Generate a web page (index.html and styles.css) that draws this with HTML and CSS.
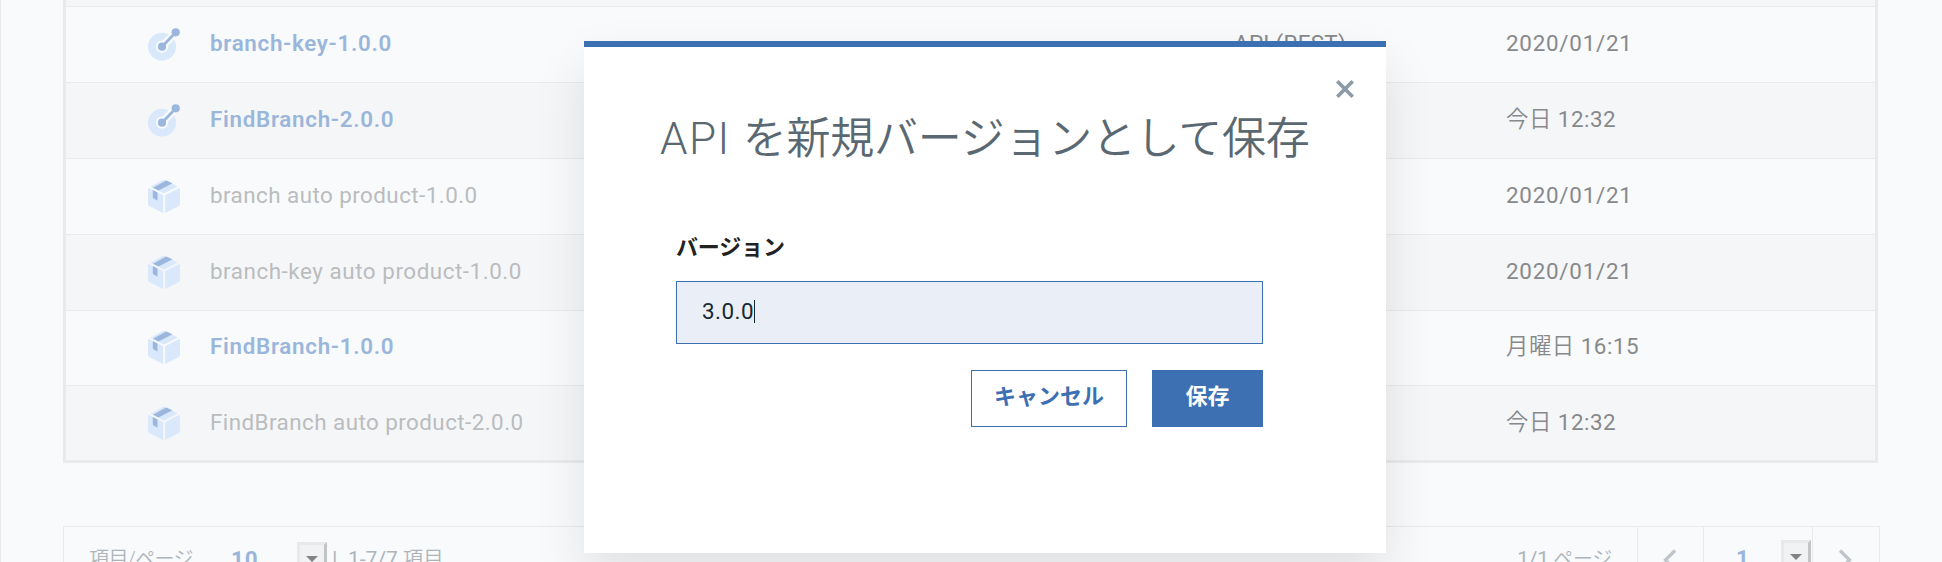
FILE: index.html
```html
<!DOCTYPE html>
<html lang="ja">
<head>
<meta charset="utf-8">
<title>API を新規バージョンとして保存</title>
<link rel="stylesheet" href="styles.css">
</head>
<body>
<svg class="defs" width="0" height="0">
  <symbol id="api" viewBox="0 0 32 34">
    <circle cx="14" cy="19.7" r="14" fill="#d9e8fb"/>
    <path d="M14 19.7 28 5.2" stroke="#f8fafc" stroke-width="7.5"/>
    <circle cx="14" cy="19.7" r="6.2" fill="#f8fafc"/>
    <path d="M14 19.7 27.6 5.5" stroke="#9bb7dd" stroke-width="2.8"/>
    <circle cx="14" cy="19.7" r="4.1" fill="#9bb7dd"/>
    <circle cx="27.7" cy="5.3" r="4.1" fill="#9bb7dd"/>
  </symbol>
  <symbol id="box" viewBox="0 0 32 34">
    <path d="M2.5 7.8 14.8 1Q16 .4 17.2 1L29.7 7.6 16 14.4Z" fill="#d9e8fb"/>
    <path d="M5 8.7 18.2 1.4 24.5 4.2 10.5 11.4Z" fill="#9bb7dd"/>
    <path d="M0 10.2Q0 8.6 1.3 9.2L15.2 16.2V34L1.2 27Q0 26.3 0 25Z" fill="#d9e8fb"/>
    <path d="M32 10.2Q32 8.6 30.7 9.2L17.2 16.2V34L30.8 27Q32 26.3 32 25Z" fill="#d9e8fb"/>
    <path d="M4.8 11 9.5 13.4V21.6L6 19.8Q4.8 19.2 4.8 18Z" fill="#9bb7dd"/>
  </symbol>
</svg>
<main class="page">
  <div class="table">
    <div class="row row-cut"></div>
    <div class="row"><svg class="icon"><use href="#api"/></svg><span class="name link n1">branch-key-1.0.0</span><span class="type">API (REST)</span><span class="date">2020/01/21</span></div>
    <div class="row alt"><svg class="icon"><use href="#api"/></svg><span class="name link n2">FindBranch-2.0.0</span><span class="type"></span><span class="date today"><span class="cj">今日</span> 12:32</span></div>
    <div class="row"><svg class="icon"><use href="#box"/></svg><span class="name n3">branch auto product-1.0.0</span><span class="type"></span><span class="date">2020/01/21</span></div>
    <div class="row alt"><svg class="icon"><use href="#box"/></svg><span class="name n4">branch-key auto product-1.0.0</span><span class="type"></span><span class="date">2020/01/21</span></div>
    <div class="row short"><svg class="icon"><use href="#box"/></svg><span class="name link n2">FindBranch-1.0.0</span><span class="type"></span><span class="date today"><span class="cj">月曜日</span> 16:15</span></div>
    <div class="row alt last"><svg class="icon"><use href="#box"/></svg><span class="name n5">FindBranch auto product-2.0.0</span><span class="type"></span><span class="date today"><span class="cj">今日</span> 12:32</span></div>
  </div>
  <div class="pager">
    <div class="pager-left"><span class="per">項目/ページ</span><b class="size">10</b><span class="select"></span><span class="bar">|</span><span class="range"><span class="num">1-7/7</span> 項目</span></div>
    <span class="pages"><span class="num">1/1</span> ページ</span>
    <div class="cell prev"><svg width="14" height="22" viewBox="0 0 14 22"><path d="M12 1.5 2.5 11 12 20.5"/></svg></div>
    <div class="cell current"><b>1</b><span class="select"></span></div>
    <div class="cell next"><svg width="14" height="22" viewBox="0 0 14 22"><path d="M2 1.5 11.5 11 2 20.5"/></svg></div>
  </div>
</main>
<section class="modal">
  <svg class="close" viewBox="0 0 18 18"><path d="M1.3 1.3 16.7 16.7M16.7 1.3 1.3 16.7"/></svg>
  <h1 class="title"><span class="latin">API </span>を新規バージョンとして保存</h1>
  <div class="form">
    <label class="label">バージョン</label>
    <div class="input"><span class="value">3.0.0</span><i class="caret"></i></div>
    <div class="actions"><button class="btn cancel">キャンセル</button><button class="btn save">保存</button></div>
  </div>
</section>
</body>
</html>
```
FILE: styles.css
```css
* { box-sizing: border-box; }
body {
  margin: 0;
  height: 562px;
  overflow: hidden;
  background: #f8fafc;
  font: 22.4px/30px Roboto, "Noto Sans CJK JP", sans-serif;
  color: #87898b;
}
.defs { position: absolute; }
.page { height: 562px; padding: 0 63px 0 62px; border-left: 1px solid #e8eaec; overflow: hidden; }
.table { width: 1815px; height: 463px; border: 3px solid #e8eaec; border-top: 0; }
.row {
  display: grid;
  grid-template-columns: 32px 1054px 272px 1fr;
  padding-left: 82px;
  height: 76px;
  align-items: center;
  border-bottom: 1px solid #e8eaec;
  white-space: nowrap;
}
.row-cut { height: 7px; background: #f5f6f8; }
.alt { background: #f5f6f8; }
.short { height: 75px; }
.last { height: 74px; border-bottom: 0; }
.icon { width: 32px; height: 34px; margin-bottom: 2px; }
.last .icon { margin-bottom: 0; }
.name { padding-left: 30px; padding-bottom: 4px; color: #babcbe; }
.link { color: #9ab6db; font-weight: 600; }
.type, .date { padding-bottom: 4px; }
.last .name, .last .date { padding-bottom: 2px; }
.n1 { letter-spacing: .68px; }
.n2 { letter-spacing: .7px; }
.n3 { letter-spacing: .45px; }
.n4 { letter-spacing: .55px; }
.n5 { letter-spacing: .45px; }
.date { letter-spacing: .75px; }
.today { letter-spacing: .5px; }
.cj { font-weight: 350; }
.type { letter-spacing: .3px; }
.pager {
  display: flex;
  width: 1817px;
  height: 70px;
  margin-top: 63px;
  border: 1px solid #e8eaec;
  color: #adb5ba;
  align-items: flex-start;
  white-space: nowrap;
}
.pager-left { display: flex; flex: 1; padding: 17px 0 0 25px; }
.per { width: 142px; font-weight: 350; font-size: 20px; letter-spacing: -.6px; }
.size { width: 66px; letter-spacing: .8px; }
.num { font-weight: 400; font-size: 21px; }
.pager b { color: #9ab6db; }
.select {
  width: 30px;
  height: 34px;
  margin-top: -2px;
  border: 3px solid #e8e9ea;
  border-right-color: #c2c4c5;
  border-bottom-color: #c2c4c5;
  background: #f1f2f4;
}
.select::before {
  content: "";
  display: block;
  margin: 11px 0 0 6px;
  width: 0;
  border: 6px solid transparent;
  border-top-color: #808284;
  border-bottom: 0;
}
.bar { width: 16px; padding-left: 5px; }
.range { padding-left: 5px; font-weight: 350; font-size: 20.4px; }
.pages { padding: 17px 25px 0 0; font-weight: 350; font-size: 20px; letter-spacing: -.3px; }
.cell { height: 70px; border-left: 1px solid #e8eaec; }
.prev { width: 66px; padding: 21px 0 0 25px; }
.current { display: flex; width: 109px; padding: 16px 0 0 32px; }
.current b { width: 45px; }
.current .select { margin-top: -3px; }
.next { width: 67px; padding: 21px 0 0 25px; }
.cell path { fill: none; stroke: #bfc7cd; stroke-width: 3.4; }
.modal {
  position: absolute;
  left: 584px;
  top: 41px;
  width: 802px;
  height: 512px;
  border-top: 6px solid #3d70b2;
  background: #fff;
  box-shadow: 0 24px 48px rgba(0, 0, 0, .1);
  padding: 60px 76px 0;
}
.close { position: absolute; right: 32px; top: 33px; width: 18px; height: 18px; stroke: #8c9ba8; stroke-width: 3.7; }
.title {
  margin: 0;
  height: 64px;
  color: #5a6872;
  font-size: 44px;
  font-weight: 350;
  line-height: 64px;
  letter-spacing: -.22px;
  white-space: nowrap;
}
.latin { font-weight: 300; letter-spacing: 1.4px; }
.form { padding: 59px 47px 0 16px; }
.label { display: block; height: 51px; line-height: 36px; font-size: 22px; letter-spacing: -.15px; font-weight: 600; color: #222; }
.input {
  display: flex;
  align-items: center;
  height: 63px;
  padding: 0 0 2px 25px;
  border: 1px solid #3d70b2;
  background: #eaeff7;
  color: #152935;
}
.value { letter-spacing: .5px; padding-bottom: 2px; }
.caret { width: 1px; height: 23px; background: #152935; }
.actions { display: flex; justify-content: flex-end; gap: 25px; margin-top: 26px; }
.btn {
  height: 57px;
  padding: 0 0 4px;
  border: 1px solid #3d70b2;
  font: 700 22px/30px Roboto, "Noto Sans CJK JP", sans-serif;
}
.cancel { width: 156px; background: #fff; color: #3d70b2; }
.save { width: 111px; background: #3d70b2; color: #fff; }
```
